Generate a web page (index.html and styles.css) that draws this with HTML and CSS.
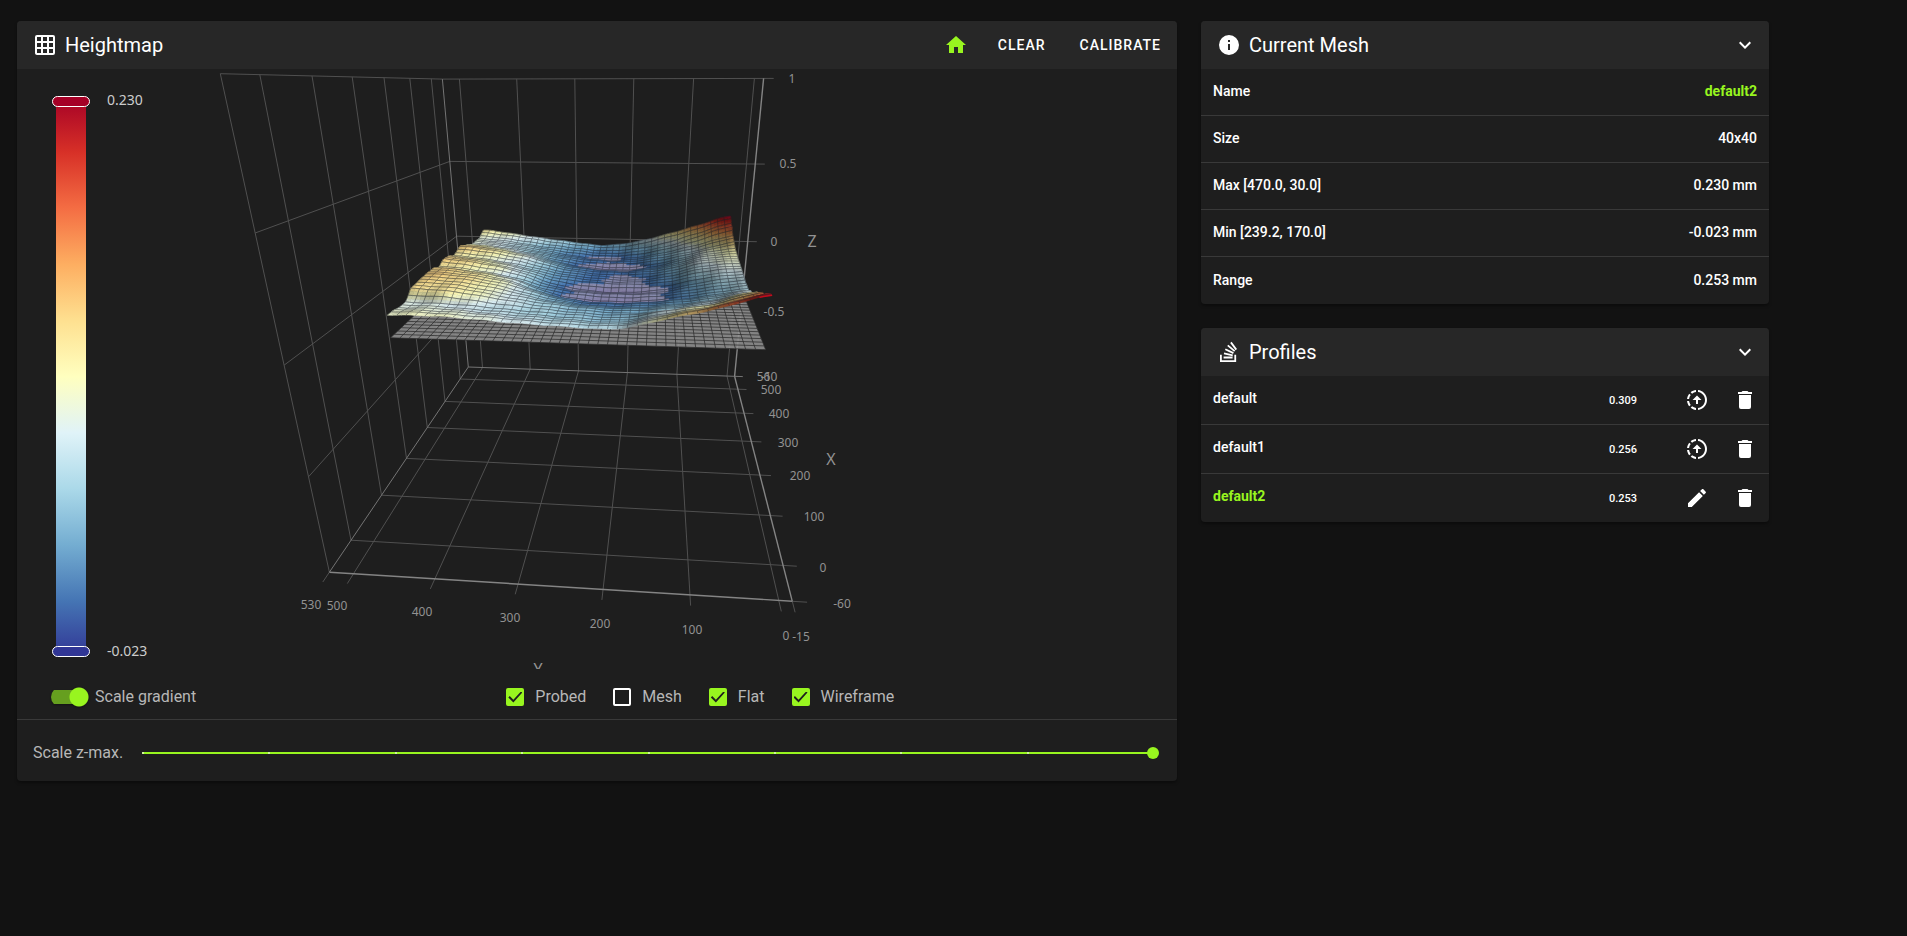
FILE: index.html
```html
<!DOCTYPE html>
<html lang="en">
<head>
<meta charset="utf-8">
<meta name="viewport" content="width=device-width, initial-scale=1">
<title>Heightmap</title>
<link rel="stylesheet" href="styles.css">
</head>
<body>
<svg class="sprite" aria-hidden="true">
  <symbol id="i-load" viewBox="0 0 24 24"><path d="M13,2.03V2.05L13,4.05C17.39,4.59 20.5,8.58 19.96,12.97C19.5,16.61 16.64,19.5 13,19.93V21.93C18.5,21.38 22.5,16.5 21.95,11C21.5,6.25 17.73,2.5 13,2.03M11,2.06C9.05,2.25 7.19,3 5.67,4.26L7.1,5.74C8.22,4.84 9.57,4.26 11,4.06V2.06M4.26,5.67C3,7.19 2.25,9.04 2.05,11H4.05C4.24,9.58 4.8,8.23 5.69,7.1L4.26,5.67M2.06,13C2.26,14.96 3.03,16.81 4.27,18.33L5.69,16.9C4.81,15.77 4.24,14.42 4.06,13H2.06M7.1,18.37L5.67,19.74C7.18,21 9.04,21.79 11,22V20C9.58,19.82 8.23,19.25 7.1,18.37M12,7.5L7.5,12H11V16H13V12H16.5L12,7.5Z"/></symbol>
  <symbol id="i-delete" viewBox="0 0 24 24"><path d="M19,4H15.5L14.5,3H9.5L8.5,4H5V6H19M6,19A2,2 0 0,0 8,21H16A2,2 0 0,0 18,19V7H6V19Z"/></symbol>
  <symbol id="i-edit" viewBox="0 0 24 24"><path d="M20.71,7.04C21.1,6.65 21.1,6 20.71,5.63L18.37,3.29C18,2.9 17.35,2.9 16.96,3.29L15.12,5.12L18.87,8.87M3,17.25V21H6.75L17.81,9.93L14.06,6.18L3,17.25Z"/></symbol>
  <symbol id="i-chevron" viewBox="0 0 24 24"><path d="M7.41,8.58L12,13.17L16.59,8.58L18,10L12,16L6,10L7.41,8.58Z"/></symbol>
</svg>
<main class="layout">
  <section class="card card-map">
    <header class="card-head">
      <svg class="icon" viewBox="0 0 24 24" aria-hidden="true"><path d="M10,4V8H14V4H10M16,4V8H20V4H16M16,10V14H20V10H16M16,16V20H20V16H16M14,20V16H10V20H14M8,20V16H4V20H8M8,14V10H4V14H8M8,8V4H4V8H8M10,14H14V10H10V14M4,2H20A2,2 0 0,1 22,4V20A2,2 0 0,1 20,22H4C2.92,22 2,21.1 2,20V4A2,2 0 0,1 4,2Z"/></svg>
      <h2>Heightmap</h2>
      <div class="actions">
        <button type="button" class="btn btn-home" aria-label="Home"><svg class="icon" viewBox="0 0 24 24"><path d="M10,20V14H14V20H19V12H22L12,3L2,12H5V20H10Z"/></svg></button>
        <button type="button" class="btn">CLEAR</button>
        <button type="button" class="btn">CALIBRATE</button>
      </div>
    </header>
    <div class="chart">
      <div class="scale">
        <div class="scale-bar">
          <span class="handle handle-max"></span>
          <span class="handle handle-min"></span>
        </div>
        <div class="scale-text"><span>0.230</span><span>-0.023</span></div>
      </div>
      <svg class="plot" id="plot" viewBox="197 69 980 600" preserveAspectRatio="xMinYMin meet" role="img" aria-label="Bed mesh surface"></svg>
    </div>
    <div class="controls">
      <label class="switch"><input type="checkbox" role="switch" checked><span>Scale gradient</span></label>
      <div class="checks">
        <label class="check"><input type="checkbox" checked><span>Probed</span></label>
        <label class="check"><input type="checkbox"><span>Mesh</span></label>
        <label class="check"><input type="checkbox" checked><span>Flat</span></label>
        <label class="check"><input type="checkbox" checked><span>Wireframe</span></label>
      </div>
    </div>
    <div class="zmax">
      <label for="zmax">Scale z-max.</label>
      <input id="zmax" type="range" min="0" max="8" step="1" value="8">
    </div>
  </section>

  <div class="side">
    <section class="card">
      <header class="card-head">
        <svg class="icon" viewBox="0 0 24 24" aria-hidden="true"><path d="M13,9H11V7H13M13,17H11V11H13M12,2A10,10 0 0,0 2,12A10,10 0 0,0 12,22A10,10 0 0,0 22,12A10,10 0 0,0 12,2Z"/></svg>
        <h2>Current Mesh</h2>
        <button type="button" class="fold" aria-label="Collapse Current Mesh"><svg class="icon"><use href="#i-chevron"/></svg></button>
      </header>
      <table class="info">
        <tr><th scope="row">Name</th><td class="active">default2</td></tr>
        <tr><th scope="row">Size</th><td>40x40</td></tr>
        <tr><th scope="row">Max [470.0, 30.0]</th><td>0.230 mm</td></tr>
        <tr><th scope="row">Min [239.2, 170.0]</th><td>-0.023 mm</td></tr>
        <tr><th scope="row">Range</th><td>0.253 mm</td></tr>
      </table>
    </section>
    <section class="card">
      <header class="card-head">
        <svg class="icon" viewBox="0 0 24 24" aria-hidden="true"><path d="M17.36,20.2V14.82H19.15V22H3V14.82H4.8V20.2H17.36M6.77,14.32L7.14,12.56L15.93,14.41L15.56,16.17L6.77,14.32M7.93,10.11L8.69,8.5L16.83,12.28L16.07,13.9L7.93,10.11M10.19,6.12L11.34,4.74L18.24,10.5L17.09,11.87L10.19,6.12M14.64,1.87L20,9.08L18.56,10.15L13.2,2.94L14.64,1.87M6.59,18.41V16.61H15.57V18.41H6.59Z"/></svg>
        <h2>Profiles</h2>
        <button type="button" class="fold" aria-label="Collapse Profiles"><svg class="icon"><use href="#i-chevron"/></svg></button>
      </header>
      <ul class="profiles">
        <li><span class="name">default</span><span class="range">0.309</span>
          <button type="button" aria-label="Load default"><svg class="icon"><use href="#i-load"/></svg></button>
          <button type="button" aria-label="Delete default"><svg class="icon"><use href="#i-delete"/></svg></button></li>
        <li><span class="name">default1</span><span class="range">0.256</span>
          <button type="button" aria-label="Load default1"><svg class="icon"><use href="#i-load"/></svg></button>
          <button type="button" aria-label="Delete default1"><svg class="icon"><use href="#i-delete"/></svg></button></li>
        <li><span class="name active">default2</span><span class="range">0.253</span>
          <button type="button" aria-label="Rename default2"><svg class="icon"><use href="#i-edit"/></svg></button>
          <button type="button" aria-label="Delete default2"><svg class="icon"><use href="#i-delete"/></svg></button></li>
      </ul>
    </section>
  </div>
</main>
<script src="plot.js"></script>
</body>
</html>
```
FILE: styles.css
```css
:root {
  --accent: #98f51f;
  --line: #393939;
  --muted: #b7b7b7;
}
* { box-sizing: border-box; }
body {
  margin: 0;
  min-height: 100vh;
  background: #121212;
  color: #fff;
  font-family: Roboto, "Liberation Sans", sans-serif;
  font-size: 14px;
}
button {
  border: 0;
  padding: 0;
  background: none;
  color: inherit;
  font: inherit;
  cursor: pointer;
}
.sprite { display: none; }
.icon { display: block; width: 24px; height: 24px; fill: currentColor; flex: none; }
.active { color: var(--accent); }

.layout {
  display: grid;
  grid-template-columns: repeat(12, minmax(0, 1fr));
  column-gap: 24px;
  align-items: start;
  padding: 21px 138px 24px 17px;
}
.card-map { grid-column: span 8; }
.side { grid-column: span 4; display: grid; gap: 24px; }
.card {
  background: #1e1e1e;
  border-radius: 4px;
  overflow: hidden;
  box-shadow: 0 2px 3px rgba(0, 0, 0, .35);
}
.card-head {
  display: flex;
  align-items: center;
  gap: 8px;
  height: 48px;
  padding-left: 16px;
  background: #272727;
}
.card-head h2 { margin: 0; font-size: 20px; font-weight: 400; line-height: 32px; }
.fold { margin: 0 12px 0 auto; }

.actions { display: flex; align-items: center; gap: 2px; margin-left: auto; }
.btn {
  height: 36px;
  padding: 0 16px;
  font-size: 14px;
  font-weight: 500;
  letter-spacing: 1px;
}
.btn-home { padding: 0 12px; color: var(--accent); }

.chart { display: flex; }
.scale { display: flex; flex: 0 0 180px; gap: 21px; padding: 27px 0 12px 39px; }
.scale-bar {
  position: relative;
  width: 30px;
  background: linear-gradient(#a50026, #d73027, #f46d43, #fdae61, #fee090, #ffffbf, #e0f3f8, #abd9e9, #74add1, #4575b4, #313695);
}
.handle {
  position: absolute;
  left: -4px;
  right: -4px;
  height: 11px;
  border: 1px solid #fff;
  border-radius: 6px;
}
.handle-max { top: 0; background: #a50026; }
.handle-min { bottom: 0; background: #313695; }
.scale-text {
  display: flex;
  flex-direction: column;
  justify-content: space-between;
  margin: -6px 0 -4px;
  color: #ccc;
  font: 14px/20px "Noto Sans", sans-serif;
}
.plot { flex: 1; min-width: 0; display: block; overflow: hidden; }
.plot text {
  font: 12px "Noto Sans", sans-serif;
  fill: #929292;
  text-anchor: middle;
  dominant-baseline: central;
}
.plot .axis-name { font-size: 16px; }

.controls {
  display: grid;
  grid-template-columns: 5fr 7fr;
  align-items: start;
  height: 51px;
  padding-top: 16px;
  border-bottom: 1px solid var(--line);
  color: var(--muted);
  font-size: 16px;
  line-height: 24px;
}
.switch, .check { display: flex; align-items: center; }
.switch { gap: 6px; padding-left: 34px; }
.switch input {
  appearance: none;
  width: 38px;
  height: 20px;
  margin: 0;
  border-radius: 14px 10px 10px 14px;
  background:
    radial-gradient(circle at 28px 10px, var(--accent) 9px, transparent 10px),
    linear-gradient(#669f1f, #669f1f) 0 3px / 30px 14px no-repeat;
  filter: drop-shadow(0 1px 1px rgba(0, 0, 0, .4));
}
.checks { display: flex; gap: 27px; padding-left: 6px; }
.check { gap: 11px; }
.check input {
  appearance: none;
  display: grid;
  place-items: center;
  width: 18px;
  height: 18px;
  margin: 0;
  border: 2px solid #fff;
  border-radius: 2px;
}
.check input:checked { border-color: var(--accent); background: var(--accent); }
.check input:checked::before {
  content: "";
  width: 14px;
  height: 11px;
  background: #1e1e1e;
  clip-path: polygon(0 55%, 10% 42%, 36% 74%, 90% 0, 100% 10%, 36% 100%);
}

.zmax { display: flex; align-items: center; gap: 13px; height: 61px; padding: 4px 18px 0 16px; color: var(--muted); font-size: 16px; }
.zmax input {
  appearance: none;
  flex: 1;
  min-width: 0;
  height: 12px;
  margin: 0;
  background: none;
}
.zmax input::-webkit-slider-runnable-track {
  height: 12px;
  background:
    repeating-linear-gradient(90deg, #cdf59a 0 2px, transparent 2px 12.5%) center / calc(100% - 12px) 2px no-repeat,
    linear-gradient(var(--accent), var(--accent)) center / calc(100% - 12px) 2px no-repeat;
}
.zmax input::-webkit-slider-thumb {
  appearance: none;
  width: 12px;
  height: 12px;
  border-radius: 50%;
  background: var(--accent);
}

.info { width: 100%; border-spacing: 0; }
.info th, .info td {
  height: 47px;
  padding: 12px 12px 14px;
  border-bottom: 1px solid var(--line);
  font-weight: 500;
  line-height: 20px;
}
.info th { text-align: left; }
.info td { text-align: right; }
.info tr:last-child > * { border-bottom: 0; }
.info .active { font-weight: 700; }

.profiles { margin: 0; padding: 0; list-style: none; }
.profiles li { display: flex; align-items: center; gap: 24px; height: 48px; padding: 0 12px; }
.profiles li + li { height: 49px; border-top: 1px solid var(--line); }
.profiles .name { flex: 1; padding-bottom: 4px; font-weight: 500; }
.profiles .name.active { font-weight: 700; }
.profiles .range { margin-right: 24px; font-size: 11px; font-weight: 500; }
```
FILE: plot.js
```js
(function () {
  var svg = document.getElementById('plot');
  var NS = 'http://www.w3.org/2000/svg';

  function add(name, attrs, text) {
    var el = document.createElementNS(NS, name);
    for (var k in attrs) el.setAttribute(k, attrs[k]);
    if (text !== undefined) el.textContent = text;
    svg.appendChild(el);
  }

  // Perspective projection; u: left to right, v: back to front, w: bottom to top
  function project(u, v, w) {
    var d = 1 - 0.0333 * u - 0.4207 * v - 0.168 * w;
    return [
      (468.3 + 241.8 * u - 277.5 * v - 100.2 * w) / d,
      (367 - 3.2 * u - 35.5 * v - 301.2 * w) / d
    ];
  }
  function U(y) { return (530 - y) / 545; }
  function V(x) { return (560 - x) / 620; }
  function W(z) { return (z + 1) / 2; }
  function pt(p) { return p[0].toFixed(1) + ' ' + p[1].toFixed(1); }
  function path(points) { return 'M' + points.map(pt).join('L'); }
  function line(a, b, color, width) {
    add('path', { d: path([a, b]), stroke: color, 'stroke-width': width, fill: 'none' });
  }

  var grid = '#505050', edge = '#747474', axis = '#848484';
  [0, 100, 200, 300, 400, 500].forEach(function (y) {
    line(project(U(y), 0, 0), project(U(y), 1.027, 0), grid, 1);
    line(project(U(y), 0, 0), project(U(y), 0, 1), grid, 1);
  });
  [0, 100, 200, 300, 400, 500].forEach(function (x) {
    line(project(0, V(x), 0), project(1.03, V(x), 0), grid, 1);
    line(project(0, V(x), 0), project(0, V(x), 1), grid, 1);
  });
  [-0.5, 0, 0.5, 1].forEach(function (z) {
    line(project(0, 0, W(z)), project(1.03, 0, W(z)), grid, 1);
    line(project(0, 0, W(z)), project(0, 1, W(z)), grid, 1);
  });
  line(project(0, 1, 0), project(0, 1, 1), grid, 1);
  line(project(0, 0, 0), project(0, 0, 1), edge, 1);
  line(project(0, 0, 0), project(1.03, 0, 0), edge, 1);
  line(project(0, 0, 0), project(0, 1, 0), edge, 1);
  line(project(0, 1, 0), project(0, 1.027, 0), grid, 1);
  line(project(1, 1, 0), project(1.03, 1, 0), grid, 1);
  line(project(1, 1, 0), project(1, 1.027, 0), grid, 1);
  line(project(1, 0, 0), project(1, 0, 1), axis, 1.4);
  line(project(1, 0, 0), project(1, 1, 0), axis, 1.4);
  line(project(0, 1, 0), project(1, 1, 0), axis, 1.4);

  // Probed heights, rows run back to front
  var rows = [
    [0.145, 0.116, 0.095, 0.070, 0.047, 0.033, 0.056, 0.110, 0.168, 0.230],
    [0.200, 0.088, 0.072, 0.046, 0.026, 0.010, 0.022, 0.060, 0.125, 0.190],
    [0.240, 0.088, 0.072, 0.046, 0.014, -0.004, 0.006, 0.044, 0.094, 0.150],
    [0.280, 0.090, 0.074, 0.048, 0.020, 0.003, 0.007, 0.036, 0.080, 0.130],
    [0.320, 0.112, 0.092, 0.060, 0.014, -0.013, -0.012, 0.024, 0.080, 0.108],
    [0.380, 0.134, 0.115, 0.080, 0.028, 0.005, 0.005, 0.028, 0.080, 0.096],
    [0.440, 0.110, 0.094, 0.064, 0.024, 0.003, -0.005, 0.020, 0.068, 0.088],
    [0.475, 0.128, 0.108, 0.070, 0.022, 0.002, -0.002, 0.014, 0.056, 0.080],
    [0.510, 0.136, 0.114, 0.076, 0.012, -0.020, -0.022, -0.001, 0.044, 0.072],
    [0.550, 0.118, 0.098, 0.066, 0.014, -0.004, -0.008, 0.004, 0.036, 0.064],
    [0.590, 0.134, 0.118, 0.084, 0.016, -0.018, -0.022, 0.001, 0.032, 0.062],
    [0.635, 0.134, 0.124, 0.092, 0.040, 0.008, 0.008, 0.020, 0.044, 0.084],
    [0.720, 0.125, 0.116, 0.086, 0.058, 0.040, 0.032, 0.048, 0.080, 0.135],
    [0.770, 0.083, 0.080, 0.068, 0.056, 0.046, 0.042, 0.080, 0.115, 0.170],
    [0.855, 0.097, 0.096, 0.087, 0.074, 0.066, 0.067, 0.115, 0.164, 0.220]
  ];
  var u0 = 0.142, u1 = 0.917, v0 = 0.145, v1 = 0.855;

  function cubic(a, b, c, d, t) {
    return b + 0.5 * t * (c - a + t * (2 * a - 5 * b + 4 * c - d + t * (3 * (b - c) + d - a)));
  }
  function across(row, s) {
    var x = Math.min(s * 8, 7.9999), i = Math.floor(x);
    function at(k) { return row[Math.max(0, Math.min(8, k)) + 1]; }
    return cubic(at(i - 1), at(i), at(i + 1), at(i + 2), x - i);
  }
  function height(s, t) {
    var v = v0 + (v1 - v0) * t, i = 0;
    while (i < rows.length - 2 && v > rows[i + 1][0]) i++;
    var f = (v - rows[i][0]) / (rows[i + 1][0] - rows[i][0]);
    f = f * f * (3 - 2 * f);
    return across(rows[i], s) * (1 - f) + across(rows[i + 1], s) * f +
      0.0015 * Math.sin(s * 61 + t * 17) + 0.001 * Math.sin(s * 23 - t * 90);
  }
  function surface(s, t) {
    return project(u0 + (u1 - u0) * s, v0 + (v1 - v0) * t, W(height(s, t)));
  }

  var ramp = [[49, 54, 149], [69, 117, 180], [116, 173, 209], [171, 217, 233], [224, 243, 248],
    [255, 255, 191], [254, 224, 144], [253, 174, 97], [244, 109, 67], [215, 48, 39], [165, 0, 38]];
  function color(s, t) {
    var z = height(s, t);
    var x = Math.max(0, Math.min(9.999, (z + 0.023) / 0.253 * 10)), i = Math.floor(x), f = x - i;
    var e = 0.01;
    var du = (height(Math.min(1, s + e), t) - height(Math.max(0, s - e), t)) / (2 * e);
    var dv = (height(s, Math.min(1, t + e)) - height(s, Math.max(0, t - e))) / (2 * e);
    var shade = Math.max(0.5, Math.min(0.97, 0.91 - 0.8 * du + 0.2 * dv));
    var c = ramp[i].map(function (a, k) { return (a + (ramp[i + 1][k] - a) * f) * shade; });
    if (z < 0) c = c.map(function (a, k) { return a * 0.3 + [168, 158, 182][k] * 0.7; });
    return 'rgb(' + c.map(Math.round).join(',') + ')';
  }

  // Flat reference plane, slightly below the zero level
  var n = 39, i, j;
  function flat(s, t) { return project(u0 + (u1 - u0) * s, v0 + (v1 - v0) * t, 0.497); }
  add('path', {
    d: path([flat(0, 0), flat(1, 0), flat(1, 1), flat(0, 1)]) + 'Z',
    fill: '#929292', 'fill-opacity': 0.88
  });
  var wires = '';
  for (i = 0; i <= n; i++) {
    wires += path([flat(i / n, 0), flat(i / n, 1)]) + path([flat(0, i / n), flat(1, i / n)]);
  }
  add('path', { d: wires, stroke: '#2c2c2c', 'stroke-opacity': 0.75, 'stroke-width': 1, fill: 'none' });

  // Probed surface, painted row by row from the back
  var sub = 2, m = n * sub;
  for (j = 0; j < n; j++) {
    for (var q = 0; q < sub; q++) {
      var t0 = (j * sub + q) / m, t1 = t0 + 1 / m;
      for (i = 0; i < m; i++) {
        var s0 = i / m, s1 = (i + 1) / m, c = color(s0 + 0.5 / m, t0 + 0.5 / m);
        add('path', {
          d: path([surface(s0, t0), surface(s1, t0), surface(s1, t1), surface(s0, t1)]) + 'Z',
          fill: c, stroke: c, 'stroke-width': 0.5
        });
      }
    }
    var back = [], front = [], cross = '';
    for (i = 0; i <= n; i++) {
      back.push(surface(i / n, j / n));
      front.push(surface(i / n, (j + 1) / n));
      cross += path([surface(i / n, j / n), surface(i / n, (j + 1) / n)]);
    }
    add('path', {
      d: path(back) + (j === n - 1 ? '' : path(front)) + cross,
      stroke: '#1c2126', 'stroke-opacity': 0.55, 'stroke-width': 0.8, fill: 'none'
    });
  }
  line(surface(0.97, 1), surface(1, 1), '#c00d1c', 1.5);

  [
    ['1', 792, 78], ['0.5', 788, 163], ['0', 774, 241], ['-0.5', 774, 311], ['-1', 766, 376],
    ['560', 767, 376], ['500', 771, 389], ['400', 779, 413], ['300', 788, 442], ['200', 800, 475],
    ['100', 814, 516], ['0', 823, 567], ['-60', 842, 603],
    ['530', 311, 604], ['500', 337, 605], ['400', 422, 611], ['300', 510, 617], ['200', 600, 623],
    ['100', 692, 629], ['0', 786, 635], ['-15', 801, 636]
  ].forEach(function (l) { add('text', { x: l[1], y: l[2] }, l[0]); });
  [['Z', 812, 241], ['X', 831, 459], ['Y', 538, 669]].forEach(function (l) {
    add('text', { x: l[1], y: l[2], 'class': 'axis-name' }, l[0]);
  });
})();
```
